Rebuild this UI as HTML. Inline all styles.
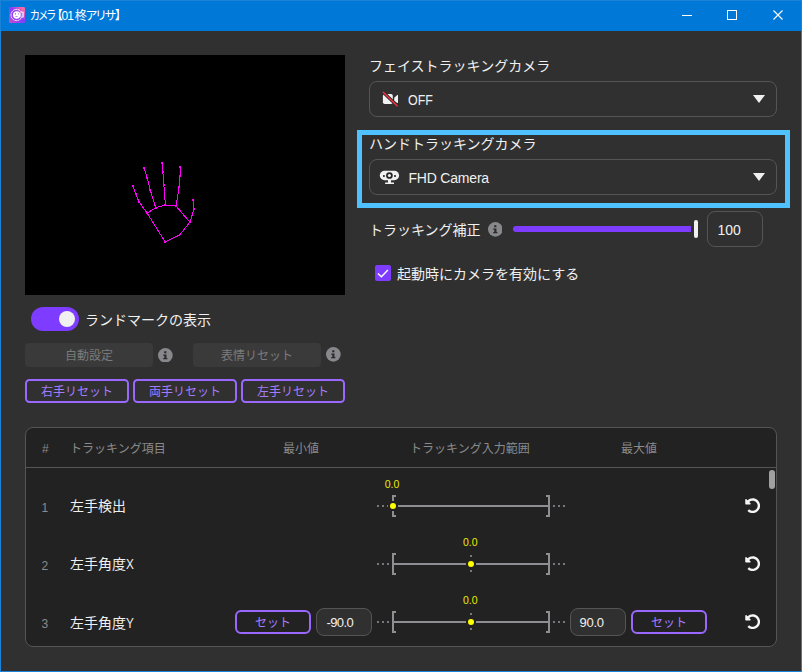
<!DOCTYPE html>
<html lang="ja">
<head>
<meta charset="utf-8">
<title>カメラ【01柊アリサ】</title>
<style>
*{box-sizing:border-box;margin:0;padding:0}
html,body{width:802px;height:672px;overflow:hidden;background:#303030}
body{position:relative;font-family:"Liberation Sans","Noto Sans CJK JP",sans-serif;color:#f0f0f0;font-size:14px}
.abs,.win *{position:absolute}
.win{position:absolute;left:0;top:0;width:802px;height:672px;background:#303030;border:1px solid #1a83d8;border-top:none}
.win span{position:static}
.titlebar{left:-1px;top:0;width:802px;height:31px;background:#0078d7;border:1px solid #1a83d8;border-bottom:none}
.title{left:29px;top:0px;height:31px;line-height:31px;font-size:12px;color:#fff;white-space:nowrap;font-feature-settings:"palt";letter-spacing:-1.05px}
.t{white-space:nowrap;line-height:20px;height:20px}
.lbl{font-size:14px;color:#f0f0f0}
.dd{left:368px;width:408px;height:36px;border:1px solid #555;border-radius:8px;background:#303030}
.dd .txt{left:38px;top:8px;font-size:14px}
.caret{width:0;height:0;border-left:6px solid transparent;border-right:6px solid transparent;border-top:8px solid #f0f0f0}
.hl{left:356px;top:130px;width:433px;height:78px;border:5px solid #4fc1ff}
.dis{height:24px;border-radius:4px;background:#3a3a3a;color:#7a7a7a;font-size:12px;text-align:center;line-height:26px;width:128px}
.pb{height:24px;border-radius:4.5px;border:2px solid #9a68ff;color:#a57cff;font-size:12px;text-align:center;line-height:22px}
.info{width:14.7px;height:14.7px}
.table{left:24px;top:427px;width:752px;height:220px;border:1px solid #555;border-radius:8px;background:#222;overflow:hidden}
.th{font-size:12px;color:#8a8a8a;top:11px}
.hr{left:0;top:39px;width:750px;height:1px;background:#555}
.num{font-size:12px;color:#8a8a8a;left:15.6px;margin-top:1px}
.rl{font-size:14px;color:#f0f0f0;left:44px}
.inp{width:56px;height:28px;border:1px solid #555;border-radius:8px;background:#303030;font-size:13px;line-height:28px;color:#f0f0f0;letter-spacing:-.3px;white-space:nowrap}
.sx{display:inline-block;transform:scaleX(.84);transform-origin:left center}
.g{background:#8e8e93}
.d{background:#77777c;width:2px;height:2px}
.yv{font-size:10.5px;color:#eaea00;width:30px;text-align:center;line-height:12px;height:12px}
.dot{width:6px;height:6px;border-radius:50%;background:#ffff00}
</style>
</head>
<body>
<div class="win">
  <!-- title bar -->
  <div class="titlebar">
    <svg style="left:8px;top:6px" width="16" height="16" viewBox="0 0 16 16">
      <defs><linearGradient id="ig" x1="0" y1="1" x2="1" y2="0"><stop offset="0" stop-color="#d450c8"/><stop offset=".3" stop-color="#9a40f0"/><stop offset=".55" stop-color="#8a3cfa"/><stop offset=".85" stop-color="#f565ac"/><stop offset="1" stop-color="#ff6c9e"/></linearGradient></defs>
      <rect width="16" height="16" rx="1.2" fill="url(#ig)"/>
      <circle cx="7.6" cy="8" r="5.6" fill="none" stroke="#fff" stroke-width="1" stroke-dasharray="2.2 .5" opacity=".95"/>
      <rect x="11.3" y="4.6" width="3.5" height="6.2" rx="1.2" fill="#f3e6ff" opacity=".92"/>
      <rect x="12.3" y="5.7" width=".9" height="4" fill="#8a3cf5"/>
      <circle cx="7.7" cy="8" r="3.7" fill="#fff"/>
      <rect x="5.9" y="6" width=".9" height="1.6" fill="#a050f0"/><rect x="8.9" y="6" width=".9" height="1.6" fill="#c090f0"/>
      <path d="M5.9 9.2 H9.2 Q7.6 10.6 5.9 9.2 Z" fill="#a050f0"/>
    </svg>
    <div class="title" id="ttl"><span style="display:inline-block;transform:scaleX(.86);transform-origin:left center;margin-right:-2.2px">カメラ</span>【0<span style="letter-spacing:.95px">1</span>柊アリサ】</div>
    <svg style="left:662px;top:-1px" width="139" height="31" viewBox="0 0 139 31" fill="none" stroke="#fff" stroke-width="1">
      <path d="M19 15.5 H29"/>
      <rect x="64.5" y="10.5" width="9" height="9"/>
      <path d="M110.5 10.5 L119.5 19.5 M119.5 10.5 L110.5 19.5" stroke-width="1.1"/>
    </svg>
  </div>

  <!-- preview -->
  <div style="left:24px;top:55px;width:320px;height:240px;background:#000">
    <svg width="320" height="240" viewBox="25 55 320 240" fill="none" stroke="#ff00ff" stroke-width="1" stroke-linejoin="round" stroke-linecap="round" shape-rendering="crispEdges">
      <polyline points="165.1,241.8 147.2,213.2 155.7,207.7 165.4,205.1 176.1,206.1 189.9,222.2 179.5,235.1 165.1,241.8"/>
      <polyline points="189.9,222.2 194,209.2 192.9,200.1"/>
      <polyline points="176.1,206.1 179.2,186.8 180,176 180,167.1"/>
      <polyline points="165.4,205.1 163.9,185 162.9,172 162.1,163.1"/>
      <polyline points="155.7,207.7 150.2,189.9 147.1,177.8 144,168"/>
      <polyline points="147.2,213.2 138.9,201.6 135.8,194.2 132.9,186"/>
      <g fill="#ff00ff" stroke="none">
        <circle cx="165.1" cy="241.8" r="1.1"/><circle cx="179.5" cy="235.1" r="1.1"/><circle cx="189.9" cy="222.2" r="1.1"/><circle cx="194" cy="209.2" r="1.1"/><circle cx="192.9" cy="200.1" r="1.1"/>
        <circle cx="176.1" cy="206.1" r="1.1"/><circle cx="179.2" cy="186.8" r="1.1"/><circle cx="180" cy="176" r="1.1"/><circle cx="180" cy="167.1" r="1.1"/>
        <circle cx="165.4" cy="205.1" r="1.1"/><circle cx="163.9" cy="185" r="1.1"/><circle cx="162.9" cy="172" r="1.1"/><circle cx="162.1" cy="163.1" r="1.1"/>
        <circle cx="155.7" cy="207.7" r="1.1"/><circle cx="150.2" cy="189.9" r="1.1"/><circle cx="147.1" cy="177.8" r="1.1"/><circle cx="144" cy="168" r="1.1"/>
        <circle cx="147.2" cy="213.2" r="1.1"/><circle cx="138.9" cy="201.6" r="1.1"/><circle cx="135.8" cy="194.2" r="1.1"/><circle cx="132.9" cy="186" r="1.1"/>
      </g>
    </svg>
  </div>

  <!-- toggle -->
  <div style="left:30px;top:307px;width:48px;height:24px;border-radius:12px;background:#7d3cff">
    <div style="left:28px;top:4px;width:16px;height:16px;border-radius:50%;background:#f0f0f0"></div>
  </div>
  <div class="t lbl" style="left:84px;top:310px">ランドマークの表示</div>

  <!-- disabled buttons -->
  <div class="dis" style="left:24px;top:343px">自動設定</div>
  <svg class="info" style="left:156.85px;top:347.55px" viewBox="0 0 16 16"><use href="#infoicon"/></svg>
  <div class="dis" style="left:192px;top:343px">表情リセット</div>
  <svg class="info" style="left:324.85px;top:347.45px" viewBox="0 0 16 16"><use href="#infoicon"/></svg>

  <!-- purple buttons -->
  <div class="pb" style="left:24px;top:379px;width:104px">右手リセット</div>
  <div class="pb" style="left:132px;top:379px;width:104px">両手リセット</div>
  <div class="pb" style="left:240px;top:379px;width:104px">左手リセット</div>

  <!-- right column -->
  <div class="t lbl" style="left:368px;top:56px">フェイストラッキングカメラ</div>
  <div class="dd" style="top:81px">
    <svg style="left:12px;top:9px" width="18" height="18" viewBox="0 0 18 18">
      <rect x=".9" y="2.9" width="9.9" height="10.1" rx="1.8" fill="#f2f2f2"/>
      <path d="M12.2 6.7 L15.3 4 Q16 3.6 16 4.4 V11.5 Q16 12.3 15.3 11.9 L12.2 10 Z" fill="#f2f2f2"/>
      <path d="M1.25 1.25 L15.25 14.9" stroke="#303030" stroke-width="3.2" stroke-linecap="butt"/>
      <path d="M1.25 1.25 L15.25 14.9" stroke="#ff3040" stroke-width="1.35" stroke-linecap="round"/>
    </svg>
    <div class="t txt" style="transform:scaleX(.89);transform-origin:left center">OFF</div>
    <div class="caret" style="left:383px;top:13px"></div>
  </div>

  <div class="hl"></div>
  <div class="t lbl" style="left:368px;top:134px">ハンドトラッキングカメラ</div>
  <div class="dd" style="top:159px">
    <svg style="left:9px;top:10px" width="22" height="16" viewBox="0 0 22 16">
      <rect x=".8" y=".8" width="19.3" height="9.4" rx="4.7" fill="#f0f0f0"/>
      <circle cx="10.4" cy="5.5" r="3.35" fill="#262626"/><circle cx="10.4" cy="5.5" r="1.55" fill="#f0f0f0"/>
      <rect x="4" y="5.1" width="1.8" height="1.8" fill="#2a2a2a"/><rect x="15.1" y="5.1" width="1.8" height="1.8" fill="#2a2a2a"/>
      <path d="M9 10 H12 V12.4 H15 V14 H6.1 V12.4 H9 Z" fill="#f0f0f0"/>
    </svg>
    <div class="t txt" style="letter-spacing:-.2px;left:38.5px">FHD Camera</div>
    <div class="caret" style="left:383px;top:13px"></div>
  </div>

  <div class="t lbl" style="left:368px;top:220px">トラッキング補正</div>
  <svg class="info" style="left:486.65px;top:221.95px" viewBox="0 0 16 16"><use href="#infoicon"/></svg>
  <div style="left:512px;top:226px;width:178px;height:6px;border-radius:3px 0 0 3px;background:#7d3cff"></div>
  <div style="left:693px;top:220px;width:4px;height:18px;border-radius:2px;background:#f0f0f0"></div>
  <div class="inp" style="left:706px;top:211px;height:36px;font-size:14px;line-height:36px;padding-left:9.5px;letter-spacing:0">100</div>

  <div style="left:374px;top:265px;width:16px;height:16px;border-radius:2px;background:#7d3cff">
    <svg width="16" height="16" viewBox="0 0 16 16" style="left:0;top:0"><path d="M2.9 8.6 L6.4 11.7 L12.9 5" fill="none" stroke="#fff" stroke-width="1.4"/></svg>
  </div>
  <div class="t lbl" style="left:396px;top:264px">起動時にカメラを有効にする</div>

  <!-- table -->
  <div class="table">
    <div class="t th" style="left:16px">#</div>
    <div class="t th" style="left:44px">トラッキング項目</div>
    <div class="t th" style="left:257px">最小値</div>
    <div class="t th" style="left:384px">トラッキング入力範囲</div>
    <div class="t th" style="left:595px">最大値</div>
    <div class="hr"></div>
    <div style="left:743px;top:42px;width:6px;height:18.6px;border-radius:3px;background:#a0a0a0"></div>

    <!-- row 1 : center y = 506 abs => 78 rel -->
    <div class="t num" style="top:69px">1</div>
    <div class="t rl" style="top:68px">左手検出</div>
    <div class="rng" style="left:351px;top:50px;width:190px;height:40px">
      <div class="t yv" style="left:0px;top:0px">0.0</div>
      <div class="d" style="left:0;top:27px"></div><div class="d" style="left:5px;top:27px"></div><div class="d" style="left:10px;top:27px;width:1px"></div>
      <div class="g" style="left:15px;top:17px;width:2px;height:6px"></div><div class="g" style="left:15px;top:17px;width:4px;height:2px"></div>
      <div class="g" style="left:15px;top:33px;width:2px;height:6px"></div><div class="g" style="left:15px;top:37px;width:4px;height:2px"></div>
      <div class="g" style="left:21px;top:27px;width:152px;height:2px"></div>
      <div class="g" style="left:171px;top:17px;width:2px;height:22px"></div><div class="g" style="left:169px;top:17px;width:4px;height:2px"></div><div class="g" style="left:169px;top:37px;width:4px;height:2px"></div>
      <div class="d" style="left:176px;top:27px"></div><div class="d" style="left:181px;top:27px"></div><div class="d" style="left:186px;top:27px"></div>
      <div class="dot" style="left:13px;top:25px"></div>
    </div>
    <svg class="rst" style="left:718.6px;top:70.05px" width="15.35" height="15.35" viewBox="0 0 512 512"><use href="#rsticon"/></svg>

    <!-- row 2 : center 564 => 136 -->
    <div class="t num" style="top:127px">2</div>
    <div class="t rl" style="top:126px">左手角度<span class="sx">X</span></div>
    <div class="rng" style="left:351px;top:108px;width:190px;height:40px">
      <div class="t yv" style="left:78.3px;top:0px">0.0</div>
      <div class="d" style="left:0;top:27px"></div><div class="d" style="left:5px;top:27px"></div><div class="d" style="left:10px;top:27px"></div>
      <div class="g" style="left:15px;top:17px;width:2px;height:22px"></div><div class="g" style="left:15px;top:17px;width:4px;height:2px"></div><div class="g" style="left:15px;top:37px;width:4px;height:2px"></div>
      <div class="g" style="left:17px;top:27px;width:72px;height:2px"></div>
      <div class="g" style="left:99px;top:27px;width:72px;height:2px"></div>
      <div class="d" style="left:93px;top:19px"></div><div class="d" style="left:93px;top:34px"></div>
      <div class="g" style="left:171px;top:17px;width:2px;height:22px"></div><div class="g" style="left:169px;top:17px;width:4px;height:2px"></div><div class="g" style="left:169px;top:37px;width:4px;height:2px"></div>
      <div class="d" style="left:176px;top:27px"></div><div class="d" style="left:181px;top:27px"></div><div class="d" style="left:186px;top:27px"></div>
      <div class="dot" style="left:91px;top:25px"></div>
    </div>
    <svg class="rst" style="left:718.6px;top:128.05px" width="15.35" height="15.35" viewBox="0 0 512 512"><use href="#rsticon"/></svg>

    <!-- row 3 : center 622 => 194 -->
    <div class="t num" style="top:185px">3</div>
    <div class="t rl" style="top:185px">左手角度<span class="sx">Y</span></div>
    <div class="pb" style="left:209px;top:182px;width:76px;border-radius:6px">セット</div>
    <div class="inp" style="left:290px;top:180px;padding-left:9.5px;letter-spacing:-.6px">-90.0</div>
    <div class="rng" style="left:351px;top:166px;width:190px;height:40px">
      <div class="t yv" style="left:78.3px;top:0px">0.0</div>
      <div class="d" style="left:0;top:27px"></div><div class="d" style="left:5px;top:27px"></div><div class="d" style="left:10px;top:27px"></div>
      <div class="g" style="left:15px;top:17px;width:2px;height:22px"></div><div class="g" style="left:15px;top:17px;width:4px;height:2px"></div><div class="g" style="left:15px;top:37px;width:4px;height:2px"></div>
      <div class="g" style="left:17px;top:27px;width:72px;height:2px"></div>
      <div class="g" style="left:99px;top:27px;width:72px;height:2px"></div>
      <div class="d" style="left:93px;top:19px"></div><div class="d" style="left:93px;top:34px"></div>
      <div class="g" style="left:171px;top:17px;width:2px;height:22px"></div><div class="g" style="left:169px;top:17px;width:4px;height:2px"></div><div class="g" style="left:169px;top:37px;width:4px;height:2px"></div>
      <div class="d" style="left:176px;top:27px"></div><div class="d" style="left:181px;top:27px"></div><div class="d" style="left:186px;top:27px"></div>
      <div class="dot" style="left:91px;top:25px"></div>
    </div>
    <div class="inp" style="left:544px;top:180px;padding-left:8.6px">90.0</div>
    <div class="pb" style="left:605px;top:182px;width:76px;border-radius:6px">セット</div>
    <svg class="rst" style="left:718.6px;top:186.05px" width="15.35" height="15.35" viewBox="0 0 512 512"><use href="#rsticon"/></svg>
  </div>

  <!-- shared icon defs -->
  <svg width="0" height="0" style="left:0;top:0">
    <defs>
      <g id="infoicon">
        <circle cx="8" cy="8" r="8" fill="#87878c"/>
        <path d="M6.8 3.6 h2.3 v2.2 h-2.3 z M5.7 7 h3.5 v3.8 h1 v1.5 h-4.5 v-1.5 h1.2 v-2.4 h-1.2 z" fill="#2a2a2a"/>
      </g>
      <g id="rsticon" fill="#f5f5f5">
        <path d="M255.545 8c-66.269.119-126.438 26.233-170.86 68.685L48.971 40.971C33.851 25.851 8 36.559 8 57.941V192c0 13.255 10.745 24 24 24h134.059c21.382 0 32.09-25.851 16.971-40.971l-41.75-41.75c30.864-28.899 70.801-44.907 113.23-45.273 92.398-.798 170.283 73.977 169.484 169.442C423.236 348.009 349.816 424 256 424c-41.127 0-79.997-14.678-110.63-41.556-4.743-4.161-11.906-3.908-16.368.553L89.34 422.659c-4.872 4.872-4.631 12.815.482 17.433C133.798 479.813 192.074 504 256 504c136.966 0 247.999-111.033 248-247.998C504.001 119.193 392.354 7.755 255.545 8z"/>
      </g>
    </defs>
  </svg>
</div>
</body>
</html>
